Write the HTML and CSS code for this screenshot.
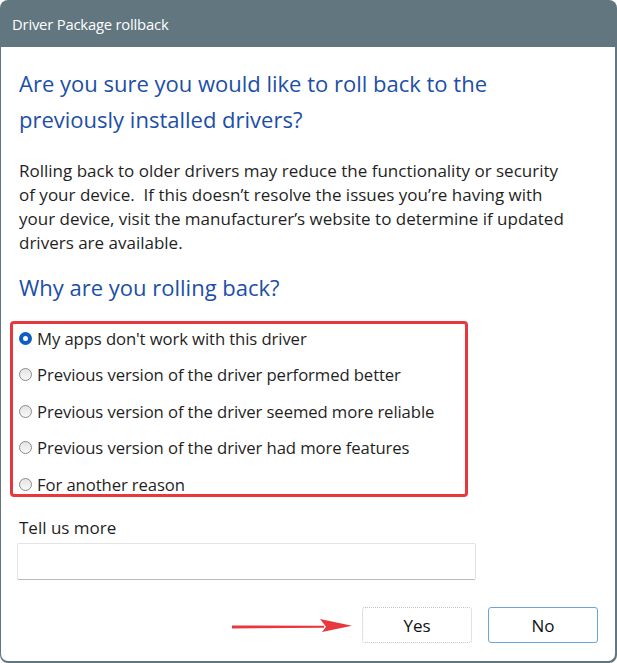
FILE: index.html
```html
<html><head>
  <meta charset="UTF-8">
  <title>Driver Package rollback</title>
  <link rel="stylesheet" href="styles.css">
</head>
<body>
  <div class="window">
    <div class="title-bar">Driver Package rollback</div>
    <div class="content">
      <h1 class="question">Are you sure you would like to roll back to the previously installed drivers?</h1>
      <p class="notice">Rolling back to older drivers may reduce the functionality or security of your device.&nbsp; If this doesn’t resolve the issues you’re having with your device, visit the manufacturer’s website to determine if updated drivers are available.</p>
      <h2 class="question small">Why are you rolling back?</h2>

      <div class="reasons">
        <label class="reason"><span class="radio checked"></span>My apps don't work with this driver</label>
        <label class="reason"><span class="radio"></span>Previous version of the driver performed better</label>
        <label class="reason"><span class="radio"></span>Previous version of the driver seemed more reliable</label>
        <label class="reason"><span class="radio"></span>Previous version of the driver had more features</label>
        <label class="reason"><span class="radio"></span>For another reason</label>
      </div>

      <div class="more">
        <div class="more-label">Tell us more</div>
        <div class="text-box"></div>
      </div>

      <div class="buttons">
        <svg class="arrow" width="120" height="16" viewBox="0 0 120 16">
          <polygon points="0,8.5 0,11.5 92,10.8 92,8.8" fill="#e8383d"/>
          <polygon points="88,2 120,8.8 90,15 94,9.8" fill="#e8383d"/>
        </svg>
        <button class="btn yes">Yes</button>
        <button class="btn no">No</button>
      </div>
    </div>
  </div>
</body>
</html>
```

FILE: styles.css
```css
:root {
  --frame-color: #62767f;
  --heading-color: #1c4fa8;
  --text-color: #1f1f1f;
  --accent-red: #e8383d;
  --radio-blue: #0f5fc2;
}

body {
  margin: 0;
  padding: 0;
  background-color: #ffffff;
  font-family: 'Open Sans', 'Noto Sans', Arial, sans-serif;
  color: var(--text-color);
}

.window {
  width: 617px;
  height: 663px;
  box-sizing: border-box;
  background-color: var(--frame-color);
  border-radius: 8px;
  padding: 0 2px 2px 1px;
  display: flex;
  flex-direction: column;
}

.title-bar {
  height: 47px;
  flex-shrink: 0;
  display: flex;
  align-items: center;
  padding-left: 11px;
  color: white;
  font-size: 14.8px;
  letter-spacing: -0.2px;
}

.content {
  flex-grow: 1;
  background-color: white;
  border-radius: 0 0 7px 7px;
  padding: 18px 17px 0 18px;
}

.question {
  margin: 0;
  max-width: 510px;
  color: var(--heading-color);
  font-weight: 400;
  font-size: 22px;
  line-height: 36px;
}

.question.small {
  margin-top: 14px;
}

.notice {
  margin: 22px 0 0;
  width: 548px;
  font-size: 17px;
  line-height: 24px;
}

.reasons {
  margin: 16px 0 0 -9px;
  width: 458px;
  box-sizing: border-box;
  border: 3px solid var(--accent-red);
  border-radius: 4px;
  padding: 4px 0 0 6px;
  display: flex;
  flex-direction: column;
  gap: 16.5px;
}

.reason {
  display: flex;
  align-items: center;
  height: 20px;
  font-size: 16.7px;
  letter-spacing: -0.1px;
}

.radio {
  width: 13px;
  height: 13px;
  box-sizing: border-box;
  border: 1px solid #8a8a8a;
  border-radius: 50%;
  background: linear-gradient(#e4e4e4, #f8f8f8);
  margin-right: 5px;
  flex-shrink: 0;
}

.radio.checked {
  border: 4px solid var(--radio-blue);
  background: white;
}

.more {
  margin-top: 21px;
}

.more-label {
  font-size: 17px;
  line-height: 20px;
}

.text-box {
  margin: 5px 0 0 -2px;
  width: 459px;
  height: 37px;
  box-sizing: border-box;
  border: 1px solid #e3e3e3;
  border-bottom-color: #b8b8b8;
  border-radius: 2px;
}

.buttons {
  margin-top: 27px;
  display: flex;
  justify-content: flex-end;
  align-items: center;
  gap: 16px;
}

.arrow {
  margin-right: -6px;
}

.btn {
  width: 110px;
  height: 36px;
  background-color: white;
  font-family: 'Open Sans', 'Noto Sans', Arial, sans-serif;
  font-size: 17px;
  color: #111;
  border-radius: 3px;
  padding: 0;
}

.btn.yes {
  border: 1px dotted #c4c4c4;
}

.btn.no {
  border: 1px solid #6aa6df;
}
```
